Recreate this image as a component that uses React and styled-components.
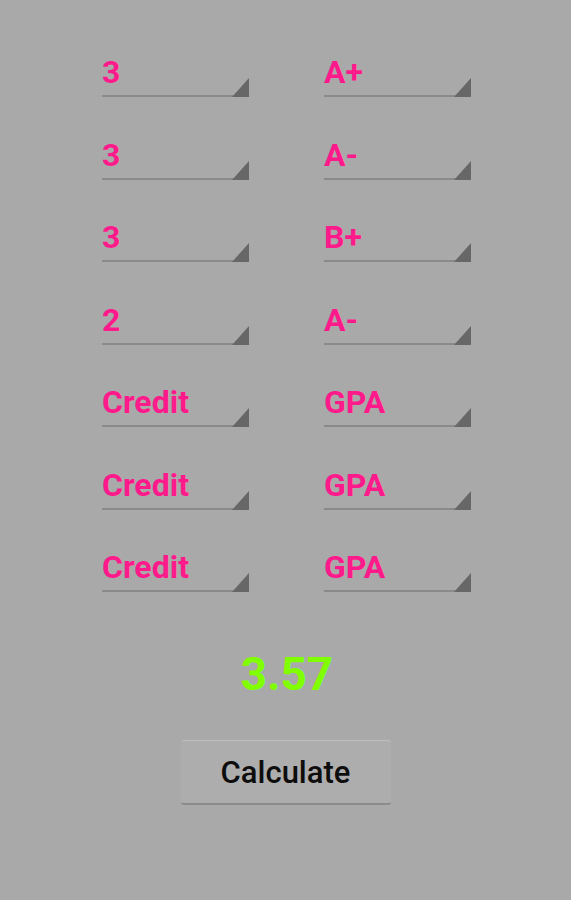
import React from "react";
import styled, { createGlobalStyle } from "styled-components";

const GlobalStyle = createGlobalStyle`
  html, body {
    margin: 0;
    padding: 0;
    background-color: #a9a9a9;
  }
  body {
    font-family: Roboto, "Liberation Sans", sans-serif;
  }
`;

const Screen = styled.div`
  width: 571px;
  min-height: 900px;
  padding-top: 48px;
  box-sizing: border-box;
  background-color: #a9a9a9;
  display: flex;
  flex-direction: column;
  align-items: center;
`;

const SpinnerGrid = styled.div`
  display: grid;
  grid-template-columns: 146px 146px;
  column-gap: 76px;
  row-gap: 33.5px;
  margin-left: 1px;
`;

const Spinner = styled.div`
  position: relative;
  height: 49px;
  box-sizing: border-box;
  padding-top: 6px;
  border-bottom: 2px solid #8a8a8a;
`;

const SpinnerText = styled.span`
  display: block;
  font-size: 32px;
  line-height: 36px;
  font-weight: 700;
  color: #ff1a8c;
`;

const Arrow = styled.div`
  position: absolute;
  right: -1px;
  bottom: -2px;
  width: 0;
  height: 0;
  border-style: solid;
  border-width: 0 0 19px 17px;
  border-color: transparent transparent #676767 transparent;
`;

const Result = styled.div`
  margin-top: 55px;
  margin-left: 3px;
  font-size: 46px;
  line-height: 54px;
  font-weight: 700;
  color: #7fff00;
`;

const CalcButton = styled.button`
  margin-top: 39px;
  width: 210px;
  height: 65px;
  display: flex;
  align-items: center;
  justify-content: center;
  background-color: #adadad;
  border: none;
  border-top: 1px solid #bebebe;
  border-bottom: 2px solid #8c8c8c;
  border-radius: 3px;
  font-family: Roboto, "Liberation Sans", sans-serif;
  font-size: 31px;
  font-weight: 500;
  color: #0d0d0d;
  cursor: pointer;
`;

const rows = [
  ["3", "A+"],
  ["3", "A-"],
  ["3", "B+"],
  ["2", "A-"],
  ["Credit", "GPA"],
  ["Credit", "GPA"],
  ["Credit", "GPA"],
];

export default function App() {
  return (
    <>
      <GlobalStyle />
      <Screen>
        <SpinnerGrid>
          {rows.map(([credit, grade], index) => (
            <React.Fragment key={index}>
              <Spinner>
                <SpinnerText>{credit}</SpinnerText>
                <Arrow />
              </Spinner>
              <Spinner>
                <SpinnerText>{grade}</SpinnerText>
                <Arrow />
              </Spinner>
            </React.Fragment>
          ))}
        </SpinnerGrid>
        <Result>3.57</Result>
        <CalcButton>Calculate</CalcButton>
      </Screen>
    </>
  );
}
